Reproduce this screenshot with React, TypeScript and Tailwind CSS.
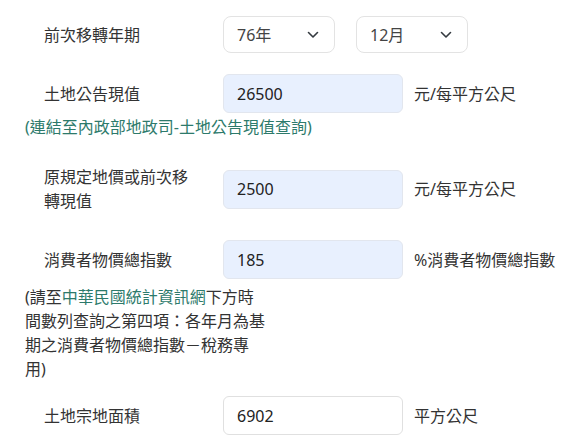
import React from "react";

const font = { fontFamily: '"Noto Sans", "Noto Sans CJK TC", sans-serif' };

function Chevron() {
  return (
    <svg width="12" height="8" viewBox="0 0 12 8" fill="none">
      <path d="M1.5 1.5 6 6l4.5-4.5" stroke="#343a40" strokeWidth="1.6" strokeLinecap="round" strokeLinejoin="round" />
    </svg>
  );
}

function Select({ value }: { value: string }) {
  return (
    <div className="flex h-[37px] w-[112px] items-center justify-between rounded-lg border border-[#e3e3e3] bg-white pl-[13px] pr-[15px] text-[#444]">
      <span>{value}</span>
      <Chevron />
    </div>
  );
}

function Field({ value, filled = true }: { value: string; filled?: boolean }) {
  return (
    <div
      className={
        "flex h-[39px] w-[180px] items-center rounded-md border px-[13px] text-[#222] " +
        (filled ? "border-[#e2e6ee] bg-[#e8f0fe]" : "border-[#e0e0e0] bg-white")
      }
    >
      {value}
    </div>
  );
}

function Row({ label, children, unit, className = "" }: { label: string; children: React.ReactNode; unit?: string; className?: string }) {
  return (
    <div className={"flex items-center " + className}>
      <div className="w-[198px] pl-[19px] pr-[30px] leading-6">{label}</div>
      {children}
      {unit && <span className="ml-[11px] whitespace-nowrap">{unit}</span>}
    </div>
  );
}

export default function App() {
  return (
    <main className="h-[444px] w-[567px] overflow-hidden bg-white pl-[25px] text-[16px] text-[#333]" style={font}>
      <Row label="前次移轉年期" className="pt-[16px]">
        <div className="flex gap-[21px]">
          <Select value="76年" />
          <Select value="12月" />
        </div>
      </Row>

      <Row label="土地公告現值" unit="元/每平方公尺" className="mt-[21px]">
        <Field value="26500" />
      </Row>
      <p className="mt-[2px] leading-6 text-[#2d7a6b]">(連結至內政部地政司-土地公告現值查詢)</p>

      <Row label="原規定地價或前次移轉現值" unit="元/每平方公尺" className="mt-[26px]">
        <Field value="2500" />
      </Row>

      <Row label="消費者物價總指數" unit="%消費者物價總指數" className="mt-[27px]">
        <Field value="185" />
      </Row>
      <p className="mt-[6px] w-[242px] leading-6">
        (請至<span className="text-[#2d7a6b]">中華民國統計資訊網</span>下方時間數列查詢之第四項：各年月為基期之消費者物價總指數－稅務專用)
      </p>

      <Row label="土地宗地面積" unit="平方公尺" className="mt-[15px]">
        <Field value="6902" filled={false} />
      </Row>
    </main>
  );
}
